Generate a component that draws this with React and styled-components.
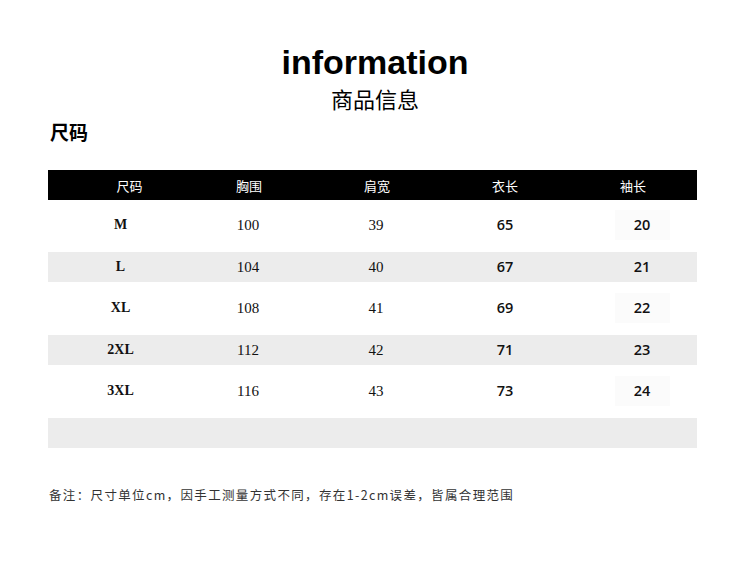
import React from "react";
import styled, { createGlobalStyle } from "styled-components";

const GlobalStyle = createGlobalStyle`
  body {
    margin: 0;
    background: #ffffff;
    font-family: "Liberation Sans", "Noto Sans CJK SC", sans-serif;
    color: #000;
  }
`;

const Page = styled.div`
  width: 750px;
  height: 577px;
  display: flex;
  flex-direction: column;
  align-items: center;
  overflow: hidden;
`;

const Title = styled.h1`
  margin: 42px 0 0 0;
  font-family: "Liberation Sans", sans-serif;
  font-weight: 700;
  font-size: 34px;
  line-height: 40px;
`;

const Subtitle = styled.div`
  margin-top: 3px;
  font-family: "Noto Sans CJK SC", sans-serif;
  font-size: 22px;
  line-height: 26px;
`;

const Section = styled.div`
  align-self: stretch;
  margin: 9px 0 0 50px;
  font-family: "Noto Sans CJK SC", sans-serif;
  font-weight: 700;
  font-size: 19px;
  line-height: 24px;
`;

const Table = styled.div`
  margin-top: 26px;
  width: 649px;
  align-self: flex-start;
  margin-left: 48px;
`;

const Row = styled.div`
  display: grid;
  grid-template-columns: 137px repeat(4, 128px);
  height: 30px;
  align-items: center;
  background: ${(p) => (p.$head ? "#000" : p.$shade ? "#ececec" : "transparent")};
`;

const Body = styled.div`
  display: flex;
  flex-direction: column;
  gap: 11.6px;
  padding-top: 10px;
`;

const HeadCell = styled.div`
  text-align: center;
  color: #fff;
  font-family: "Noto Sans CJK SC", sans-serif;
  font-size: 13px;
  transform: translateX(${(p) => (p.$col === 0 ? 13 : 0)}px);
`;

const fonts = [
  `font-family: "Liberation Serif", serif; font-weight: 700; font-size: 14px;`,
  `font-family: "Liberation Serif", serif; font-size: 15px;`,
  `font-family: "Liberation Serif", serif; font-size: 15px;`,
  `font-family: "Open Sans", sans-serif; font-weight: 600; font-size: 14.5px;`,
  `font-family: "Open Sans", sans-serif; font-weight: 600; font-size: 14.5px;`,
];
const shifts = [4, -1, -1, 0, 9];

const Cell = styled.div`
  text-align: center;
  color: #111;
  line-height: 30px;
  ${(p) => fonts[p.$col]}
  transform: translateX(${(p) => shifts[p.$col]}px);
`;

const Patch = styled.span`
  display: inline-block;
  width: 55px;
  background: ${(p) => (p.$on ? "#fbfbfb" : "transparent")};
`;

const Note = styled.div`
  align-self: flex-start;
  margin: 38px 0 0 49px;
  font-family: "Noto Sans CJK SC", sans-serif;
  font-size: 12.5px;
  letter-spacing: 1.35px;
  line-height: 18px;
  color: #333;
`;

const heads = ["尺码", "胸围", "肩宽", "衣长", "袖长"];
const rows = [
  ["M", "100", "39", "65", "20"],
  ["L", "104", "40", "67", "21"],
  ["XL", "108", "41", "69", "22"],
  ["2XL", "112", "42", "71", "23"],
  ["3XL", "116", "43", "73", "24"],
];

const App = () => (
  <Page>
    <GlobalStyle />
    <Title>information</Title>
    <Subtitle>商品信息</Subtitle>
    <Section>尺码</Section>
    <Table>
      <Row $head>
        {heads.map((h, c) => (
          <HeadCell key={h} $col={c}>
            {h}
          </HeadCell>
        ))}
      </Row>
      <Body>
        {rows.map((r, i) => (
          <Row key={r[0]} $shade={i % 2 === 1}>
            {r.map((v, c) => (
              <Cell key={c} $col={c}>
                {c === 4 ? <Patch $on={i % 2 === 0}>{v}</Patch> : v}
              </Cell>
            ))}
          </Row>
        ))}
        <Row $shade />
      </Body>
    </Table>
    <Note>备注：尺寸单位cm，因手工测量方式不同，存在1-2cm误差，皆属合理范围</Note>
  </Page>
);

export default App;
